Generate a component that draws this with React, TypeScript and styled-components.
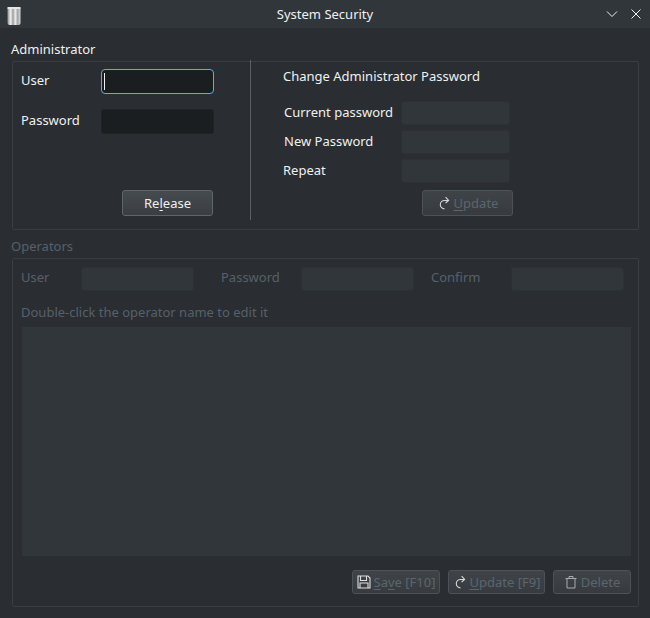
import styled, { createGlobalStyle } from "styled-components";

const Global = createGlobalStyle`
  html, body {
    margin: 0;
    padding: 0;
    background: #2a2e32;
  }
  * {
    box-sizing: border-box;
  }
`;

const Window = styled.div`
  width: 650px;
  height: 618px;
  overflow: hidden;
  background: #2a2e32;
  color: #eff0f1;
  font-family: "Noto Sans", sans-serif;
  font-size: 13px;
  line-height: 18px;
`;

const TitleBar = styled.div`
  height: 28px;
  background: #31363b;
  display: grid;
  grid-template-columns: 50px 1fr 50px;
  align-items: center;
`;

const AppIcon = styled.svg`
  width: 16px;
  height: 20px;
  margin: 3px 0 0 6px;
  display: block;
`;

const Title = styled.div`
  text-align: center;
  color: #eff0f1;
`;

const WindowButtons = styled.div`
  display: flex;
  gap: 12px;
  justify-content: flex-end;
  padding-right: 8px;
  svg {
    display: block;
  }
`;

const Content = styled.div`
  padding: 12px 12px 0 12px;
`;

const GroupTitle = styled.div<{ $disabled?: boolean }>`
  height: 21px;
  margin-left: -1px;
  color: ${(p) => (p.$disabled ? "#57606a" : "#eff0f1")};
`;

const Group = styled.div`
  border: 1px solid #393e43;
  border-radius: 2px;
`;

const AdminGroup = styled(Group)`
  height: 169px;
  display: flex;
  width: 627px;
`;

const LoginPane = styled.div`
  width: 237px;
  padding: 7px 0 0 8px;
  display: flex;
  flex-direction: column;
`;

const LoginRow = styled.div`
  display: grid;
  grid-template-columns: 80px 113px;
  height: 25px;
  margin-bottom: 15px;
  align-items: start;
`;

const RowLabel = styled.div`
  padding-top: 2px;
  color: #eff0f1;
`;

const Divider = styled.div`
  width: 1px;
  height: 160px;
  margin-top: -2px;
  background: #59616a;
`;

const PasswordPane = styled.div`
  flex: 1;
  padding: 5px 0 0 32px;
`;

const PaneHeading = styled.div`
  height: 34px;
`;

const PasswordRow = styled.div`
  display: grid;
  grid-template-columns: 118px 109px;
  height: 24px;
  margin-bottom: 5px;
  align-items: center;
`;

const PasswordLabel = styled.div<{ $shift?: boolean }>`
  padding-left: ${(p) => (p.$shift ? "0" : "1px")};
  margin-top: -2px;
`;

const Field = styled.div<{ $state: "focus" | "dark" | "off" }>`
  position: relative;
  border-radius: ${(p) => (p.$state === "focus" ? "4px" : "3px")};
  height: 100%;
  background: ${(p) => (p.$state === "off" ? "#31363b" : "#1b1e20")};
  border: 1px solid
    ${(p) =>
      p.$state === "focus"
        ? "#4fb4e8"
        : p.$state === "dark"
        ? "#1f2326"
        : "#2d3136"};
`;

const Caret = styled.span`
  position: absolute;
  left: 2px;
  top: 3px;
  width: 1px;
  height: 17px;
  background: #eff0f1;
`;

const ActionRow = styled.div<{ $left: number; $top: number }>`
  padding-left: ${(p) => p.$left}px;
  margin-top: ${(p) => p.$top}px;
`;

const Button = styled.div<{ $width: number; $off?: boolean }>`
  width: ${(p) => p.$width}px;
  height: 26px;
  display: flex;
  align-items: center;
  justify-content: center;
  gap: 3px;
  border-radius: 3px;
  border: 1px solid ${(p) => (p.$off ? "#4c5257" : "#5f656b")};
  background: ${(p) =>
    p.$off
      ? "linear-gradient(#3f4449, #373b40)"
      : "linear-gradient(#464b50, #3a3e43)"};
  color: ${(p) => (p.$off ? "#5b656e" : "#eff0f1")};
  u {
    text-underline-offset: 2px;
  }
  svg {
    flex: none;
  }
`;

const OperatorsTitle = styled(GroupTitle)`
  margin-top: 7px;
`;

const OperatorsGroup = styled(Group)`
  width: 627px;
  height: 349px;
  padding: 8px 7px 0 8px;
`;

const OperatorFields = styled.div`
  display: grid;
  grid-template-columns: 60px 113px 27px 80px 113px 17px 80px 113px;
  height: 24px;
  color: #57606a;
`;

const OperatorLabel = styled.div<{ $col: number }>`
  grid-column: ${(p) => p.$col};
  line-height: 21px;
`;

const OperatorField = styled(Field)<{ $col: number }>`
  grid-column: ${(p) => p.$col};
`;

const Hint = styled.div`
  color: #57606a;
  height: 36px;
  padding-top: 12px;
`;

const ListBox = styled.div`
  width: 609px;
  height: 229px;
  margin-left: 1px;
  background: #31363b;
`;

const ToolRow = styled.div`
  display: flex;
  justify-content: flex-end;
  gap: 8px;
  margin-top: 14px;
`;

const SmallButton = styled(Button)`
  height: 24px;
`;

const RedoIcon = () => (
  <svg width="14" height="14" viewBox="0 0 14 14" fill="none" stroke="#d5d7d9" strokeWidth="1.1">
    <path d="M11.5 4.5H7.5A4.2 4.2 0 0 0 7.5 12.9" />
    <path d="M8.6 1.2l3 3.2-3 2.6" />
  </svg>
);

const SaveIcon = () => (
  <svg width="14" height="14" viewBox="0 0 14 14" fill="none" stroke="#dcddde" strokeWidth="1.1">
    <path d="M1 1h10l2 2v10H1z" />
    <path d="M3.5 1v4.5h6V1M3 13V8h8v5" />
  </svg>
);

const TrashIcon = () => (
  <svg width="14" height="14" viewBox="0 0 14 14" fill="none" stroke="#a8abae" strokeWidth="1">
    <path d="M1.5 3.5h11M5 3.5v-2h4v2M3 3.5v9.5h8V3.5" />
  </svg>
);

export default function App() {
  return (
    <Window>
      <Global />
      <TitleBar>
        <AppIcon viewBox="0 0 16 20">
          <defs>
            <linearGradient id="can" x1="0" x2="1" y1="0" y2="0">
              <stop offset="0" stopColor="#8e9193" />
              <stop offset="0.25" stopColor="#f2f2f2" />
              <stop offset="0.42" stopColor="#9a9c9e" />
              <stop offset="0.6" stopColor="#ededed" />
              <stop offset="0.78" stopColor="#a3a5a7" />
              <stop offset="1" stopColor="#d8d9da" />
            </linearGradient>
          </defs>
          <rect x="1.5" y="1" width="13" height="18" rx="2" fill="url(#can)" />
          <rect x="1.5" y="1" width="13" height="2" fill="#e4e5e6" />
        </AppIcon>
        <Title>System Security</Title>
        <WindowButtons>
          <svg width="12" height="12" viewBox="0 0 12 12" fill="none" stroke="#eff0f1" strokeWidth="1">
            <path d="M1 3.5l5 5 5-5" />
          </svg>
          <svg width="12" height="12" viewBox="0 0 12 12" fill="none" stroke="#eff0f1" strokeWidth="1">
            <path d="M1.5 1.5l9 9M10.5 1.5l-9 9" />
          </svg>
        </WindowButtons>
      </TitleBar>
      <Content>
        <GroupTitle>Administrator</GroupTitle>
        <AdminGroup>
          <LoginPane>
            <LoginRow>
              <RowLabel>User</RowLabel>
              <Field $state="focus">
                <Caret />
              </Field>
            </LoginRow>
            <LoginRow>
              <RowLabel>Password</RowLabel>
              <Field $state="dark" />
            </LoginRow>
            <ActionRow $left={101} $top={41}>
              <Button $width={91}>
                <span>
                  Re<u>l</u>ease
                </span>
              </Button>
            </ActionRow>
          </LoginPane>
          <Divider />
          <PasswordPane>
            <PaneHeading>Change Administrator Password</PaneHeading>
            <PasswordRow>
              <PasswordLabel>Current password</PasswordLabel>
              <Field $state="off" />
            </PasswordRow>
            <PasswordRow>
              <PasswordLabel>New Password</PasswordLabel>
              <Field $state="off" />
            </PasswordRow>
            <PasswordRow>
              <PasswordLabel $shift>Repeat</PasswordLabel>
              <Field $state="off" />
            </PasswordRow>
            <ActionRow $left={139} $top={7}>
              <Button $width={91} $off>
                <RedoIcon />
                <span>
                  <u>U</u>pdate
                </span>
              </Button>
            </ActionRow>
          </PasswordPane>
        </AdminGroup>
        <OperatorsTitle $disabled>Operators</OperatorsTitle>
        <OperatorsGroup>
          <OperatorFields>
            <OperatorLabel $col={1}>User</OperatorLabel>
            <OperatorField $col={2} $state="off" />
            <OperatorLabel $col={4}>Password</OperatorLabel>
            <OperatorField $col={5} $state="off" />
            <OperatorLabel $col={7}>Confirm</OperatorLabel>
            <OperatorField $col={8} $state="off" />
          </OperatorFields>
          <Hint>Double-click the operator name to edit it</Hint>
          <ListBox />
          <ToolRow>
            <SmallButton $width={88} $off>
              <SaveIcon />
              <span>
                <u>S</u>a<u>v</u>e [F10]
              </span>
            </SmallButton>
            <SmallButton $width={97} $off>
              <RedoIcon />
              <span>
                <u>U</u>pdate [F9]
              </span>
            </SmallButton>
            <SmallButton $width={78} $off>
              <TrashIcon />
              <span>Delete</span>
            </SmallButton>
          </ToolRow>
        </OperatorsGroup>
      </Content>
    </Window>
  );
}
